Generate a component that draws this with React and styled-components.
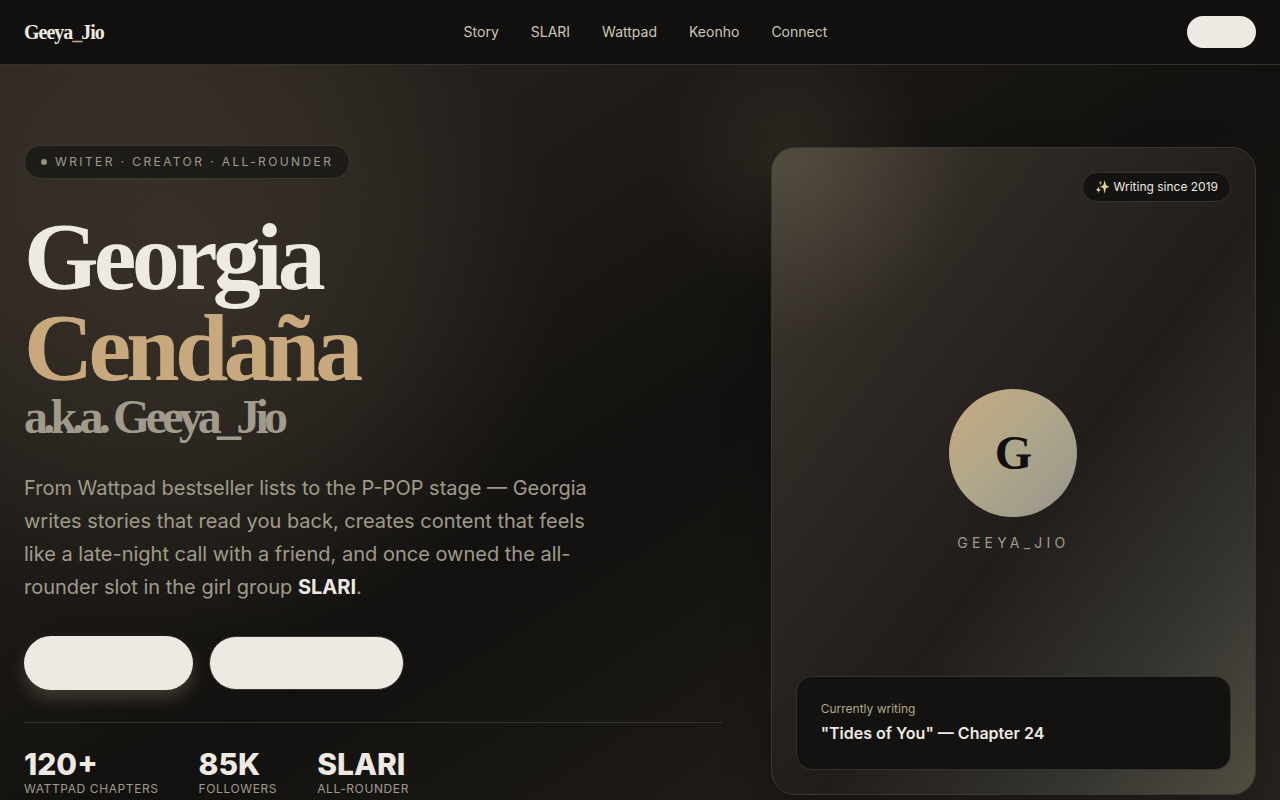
import React from 'react';
import styled, { createGlobalStyle } from 'styled-components';

const GlobalStyle = createGlobalStyle`
	* {
		box-sizing: border-box;
	}

	body {
		margin: 0;
		background-color: #11100e;
		color: #eee9e2;
		font-family: Inter, 'Liberation Sans', sans-serif;
		font-size: 16px;
		line-height: 24px;
	}

	h1,
	p,
	dl,
	dd {
		margin: 0;
	}
`;

const Page = styled.div`
	min-height: 100vh;
	display: flex;
	flex-direction: column;
`;

const Header = styled.header`
	background-color: #11100e;
	border-bottom: 1px solid #34322c;
`;

const HeaderInner = styled.div`
	display: flex;
	align-items: center;
	justify-content: space-between;
	height: 64px;
	max-width: 1280px;
	margin: 0 auto;
	padding: 0 24px;
`;

const Logo = styled.a`
	font-family: 'Liberation Serif', serif;
	font-size: 20px;
	font-weight: 700;
	line-height: 28px;
	letter-spacing: -0.05em;
	color: #eee9e2;
	text-decoration: none;

	span {
		color: #c8a97e;
	}
`;

const Nav = styled.nav`
	display: flex;
	gap: 32px;
`;

const NavLink = styled.a`
	font-size: 14px;
	line-height: 20px;
	color: #cdc7b9;
	text-decoration: none;
`;

const PillButton = styled.button`
	width: ${(props) => props.$width}px;
	height: ${(props) => (props.$small ? 32 : 54)}px;
	padding: 0;
	border: ${(props) => (props.$outlined ? '1px solid #34322c' : 'none')};
	border-radius: 999px;
	background-color: #eee9e2;
	box-shadow: ${(props) => (props.$glow ? '0 8px 16px rgba(200, 185, 150, 0.24)' : 'none')};
	cursor: pointer;
`;

const Hero = styled.main`
	flex: 1;
	background:
		radial-gradient(circle at 200px 220px, rgba(150, 135, 105, 0.18), rgba(150, 135, 105, 0.1) 200px, rgba(150, 135, 105, 0) 360px),
		radial-gradient(circle at 62% 96px, rgba(200, 169, 126, 0.1), rgba(200, 169, 126, 0) 136px),
		linear-gradient(to bottom right, #2e2722, #12110f 50%, #2a2521);
`;

const HeroGrid = styled.div`
	display: grid;
	grid-template-columns: repeat(12, 1fr);
	column-gap: 48px;
	align-items: center;
	max-width: 1280px;
	margin: 0 auto;
	padding: 80px 24px;
`;

const Intro = styled.section`
	grid-column: span 7;
	display: flex;
	flex-direction: column;
	align-items: flex-start;
	gap: 32px;
`;

const Eyebrow = styled.div`
	display: flex;
	align-items: center;
	gap: 8px;
	padding: 8px 16px;
	border: 1px solid #3a3832;
	border-radius: 999px;
	background-color: #1e1c19;
	color: #a09b8c;
	font-size: 12px;
	line-height: 16px;
	letter-spacing: 0.2em;
	text-transform: uppercase;
`;

const Dot = styled.span`
	width: 6px;
	height: 6px;
	border-radius: 50%;
	background-color: #99907f;
`;

const Title = styled.h1`
	font-family: 'Liberation Serif', serif;
	font-size: 96px;
	font-weight: 700;
	line-height: 91px;
	letter-spacing: -0.05em;
`;

const Surname = styled.span`
	display: block;
	color: #c8a97e;
`;

const Alias = styled.span`
	display: block;
	font-size: 48px;
	line-height: 47px;
	color: #a09b8c;
`;

const Lead = styled.p`
	max-width: 576px;
	font-size: 20px;
	line-height: 33px;
	color: #a09b8c;

	strong {
		font-weight: 700;
		color: #eee9e2;
	}
`;

const Actions = styled.div`
	display: flex;
	gap: 16px;
`;

const Stats = styled.dl`
	display: flex;
	gap: 40px;
	width: 100%;
	padding-top: 24px;
	border-top: 1px solid #34322c;
`;

const Stat = styled.div`
	display: flex;
	flex-direction: column-reverse;

	dt {
		font-size: 12px;
		line-height: 16px;
		letter-spacing: 0.05em;
		text-transform: uppercase;
		color: #a09b8c;
	}

	dd {
		font-size: 30px;
		font-weight: 800;
		line-height: 34px;
	}
`;

const Card = styled.aside`
	grid-column: span 5;
	display: grid;
	grid-template-rows: 1fr auto 1fr;
	aspect-ratio: 3 / 4;
	padding: 24px;
	border: 1px solid #3a3832;
	border-radius: 24px;
	background:
		radial-gradient(circle at 20px 10px, rgba(140, 135, 110, 0.24), rgba(140, 135, 110, 0) 180px),
		linear-gradient(to bottom right, #403a31, #302a25 25%, #211d1b 55%, #353430 80%, #504d40);
	box-shadow: 0 24px 48px rgba(0, 0, 0, 0.25);
`;

const Badge = styled.div`
	justify-self: end;
	align-self: start;
	padding: 6px 12px;
	border: 1px solid #34322c;
	border-radius: 999px;
	background-color: #141311;
	font-size: 12px;
	line-height: 16px;
`;

const Sparkle = styled.span`
	filter: sepia(0.6) saturate(0.8) brightness(0.9);
`;

const Profile = styled.div`
	display: flex;
	flex-direction: column;
	align-items: center;
	gap: 16px;
`;

const Avatar = styled.div`
	display: grid;
	place-items: center;
	width: 128px;
	height: 128px;
	border-radius: 50%;
	background: linear-gradient(135deg, #c8a97e, #b0a88a 45%, #98958c);
	color: #11100e;
	font-family: 'Liberation Serif', serif;
	font-size: 48px;
	font-weight: 700;
	line-height: 48px;
`;

const Handle = styled.p`
	font-size: 14px;
	line-height: 20px;
	letter-spacing: 0.3em;
	text-transform: uppercase;
	color: #a09b8c;
`;

const NowWriting = styled.div`
	align-self: end;
	padding: 24px;
	border: 1px solid #34322c;
	border-radius: 16px;
	background-color: #131210;
`;

const NowLabel = styled.p`
	margin-bottom: 4px;
	font-size: 12px;
	line-height: 16px;
	color: #b0a88a;
`;

const NowTitle = styled.p`
	font-weight: 600;
`;

const links = ['Story', 'SLARI', 'Wattpad', 'Keonho', 'Connect'];

const stats = [
	{ value: '120+', label: 'Wattpad Chapters' },
	{ value: '85K', label: 'Followers' },
	{ value: 'SLARI', label: 'All-Rounder' },
];

const App = () => {
	return (
		<Page>
			<GlobalStyle />
			<Header>
				<HeaderInner>
					<Logo href='#top'>
						Geeya<span>_</span>Jio
					</Logo>
					<Nav>
						{links.map((link) => (
							<NavLink key={link} href={`#${link.toLowerCase()}`}>
								{link}
							</NavLink>
						))}
					</Nav>
					<PillButton type='button' $small $width={69} aria-label='Contact' />
				</HeaderInner>
			</Header>
			<Hero>
				<HeroGrid>
					<Intro>
						<Eyebrow>
							<Dot />
							Writer · Creator · All-Rounder
						</Eyebrow>
						<Title>
							Georgia
							<Surname>Cendaña</Surname>
							<Alias>a.k.a. Geeya_Jio</Alias>
						</Title>
						<Lead>
							From Wattpad bestseller lists to the P-POP stage — Georgia writes stories that read you
							back, creates content that feels like a late-night call with a friend, and once owned the
							all-rounder slot in the girl group <strong>SLARI</strong>.
						</Lead>
						<Actions>
							<PillButton type='button' $glow $width={169} aria-label='Read stories' />
							<PillButton type='button' $outlined $width={195} aria-label='Follow the journey' />
						</Actions>
						<Stats>
							{stats.map((stat) => (
								<Stat key={stat.label}>
									<dt>{stat.label}</dt>
									<dd>{stat.value}</dd>
								</Stat>
							))}
						</Stats>
					</Intro>
					<Card>
						<Badge>
							<Sparkle>✨</Sparkle> Writing since 2019
						</Badge>
						<Profile>
							<Avatar>G</Avatar>
							<Handle>Geeya_Jio</Handle>
						</Profile>
						<NowWriting>
							<NowLabel>Currently writing</NowLabel>
							<NowTitle>"Tides of You" — Chapter 24</NowTitle>
						</NowWriting>
					</Card>
				</HeroGrid>
			</Hero>
		</Page>
	);
};

export default App;
